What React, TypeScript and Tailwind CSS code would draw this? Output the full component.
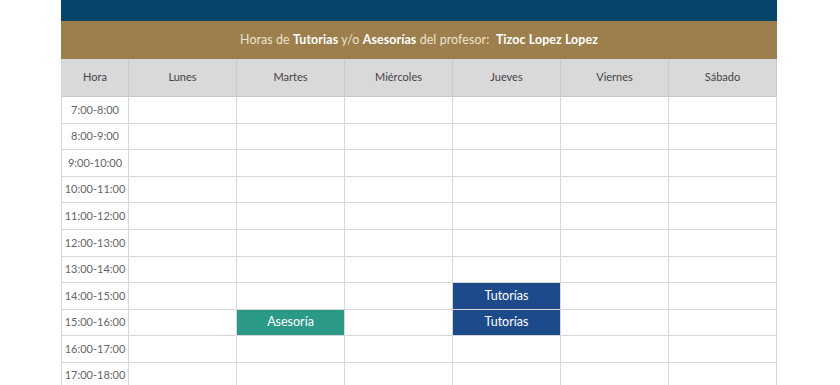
import React from "react";

const days = ["Lunes", "Martes", "Miércoles", "Jueves", "Viernes", "Sábado"];
const hours = [
  "7:00-8:00",
  "8:00-9:00",
  "9:00-10:00",
  "10:00-11:00",
  "11:00-12:00",
  "12:00-13:00",
  "13:00-14:00",
  "14:00-15:00",
  "15:00-16:00",
  "16:00-17:00",
  "17:00-18:00",
];

type Slot = { label: string; kind: "t" | "a" };
const slots: Record<string, Slot> = {
  "14:00-15:00|Jueves": { label: "Tutorías", kind: "t" },
  "15:00-16:00|Jueves": { label: "Tutorías", kind: "t" },
  "15:00-16:00|Martes": { label: "Asesoría", kind: "a" },
};

export default function App() {
  return (
    <div
      className="w-[840px] h-[385px] overflow-hidden bg-white"
      style={{ fontFamily: "Lato, 'Open Sans', sans-serif" }}
    >
      <div className="ml-[61px] w-[716px]">
        <div className="h-[21px] bg-[#054569]" />
        <div className="h-[38px] bg-[#9c7f4c] flex items-center justify-center text-[12.4px] text-[#ece4d2] tracking-[0.1px]">
          <span>
            Horas de <b className="font-bold text-white">Tutorias</b> y/o{" "}
            <b className="font-bold text-white">Asesorías</b> del profesor:&nbsp;{" "}
            <b className="font-bold text-white">Tizoc Lopez Lopez</b>
          </span>
        </div>
        <div className="grid grid-cols-[67px_repeat(6,108px)] border-l border-[#d6d6d6]">
          <div className="h-[38px] bg-[#d9d9d9] border-r border-b border-[#c9c9c9] flex items-center justify-center text-[11px] text-[#444]">
            Hora
          </div>
          {days.map((d) => (
            <div
              key={d}
              className="h-[38px] bg-[#d9d9d9] border-r border-b border-[#c9c9c9] flex items-center justify-center text-[11px] text-[#444]"
            >
              {d}
            </div>
          ))}
          {hours.map((h) => (
            <React.Fragment key={h}>
              <div className="h-[26.6px] border-r border-b border-[#d6d6d6] flex items-center justify-center text-[11px] text-[#666]">
                {h}
              </div>
              {days.map((d) => {
                const s = slots[`${h}|${d}`];
                if (!s)
                  return (
                    <div
                      key={d}
                      className="h-[26.6px] border-r border-b border-[#d6d6d6]"
                    />
                  );
                return (
                  <div
                    key={d}
                    className={
                      s.kind === "t"
                        ? "h-[26.6px] border-r border-b border-[#d6d6d6] bg-[#1d4a8b] text-white flex items-center justify-center text-[12.5px]"
                        : "h-[26.6px] border-r border-b border-[#d6d6d6] bg-[#2a9a87] text-white flex items-center justify-center text-[12.5px]"
                    }
                  >
                    {s.label}
                  </div>
                );
              })}
            </React.Fragment>
          ))}
        </div>
      </div>
    </div>
  );
}
